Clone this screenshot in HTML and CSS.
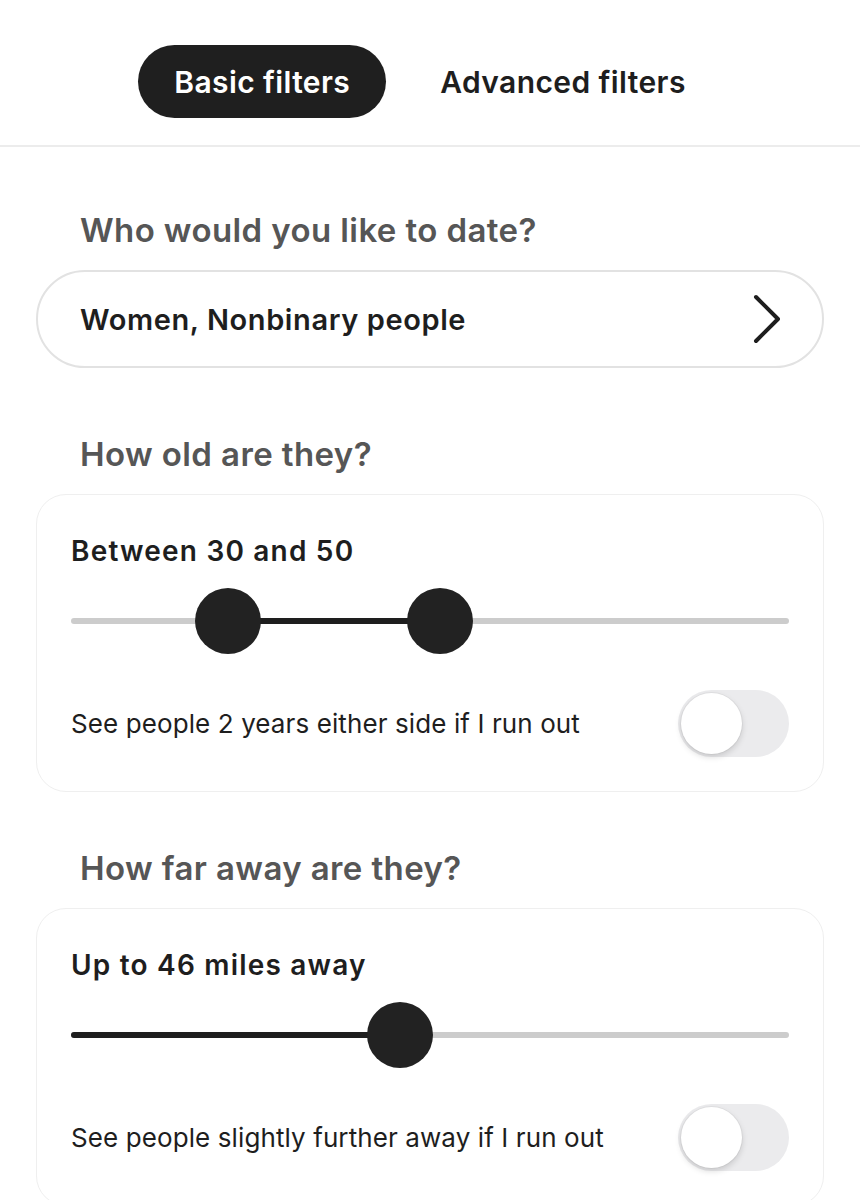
FILE: index.html
```html
<!DOCTYPE html>
<html>
<head>
<meta charset="utf-8">
<link rel="stylesheet" href="styles.css">
</head>
<body>
<header class="tabs">
  <div class="tab active">Basic filters</div>
  <div class="tab">Advanced filters</div>
</header>
<main class="content">
  <h2 class="heading">Who would you like to date?</h2>
  <div class="select">
    <span class="select-text">Women, Nonbinary people</span>
    <svg class="chevron" width="32" height="50" viewBox="0 0 32 50"><path d="M4 3 L26 25 L4 47" fill="none" stroke="#1e1e1e" stroke-width="4" stroke-linecap="round" stroke-linejoin="round"/></svg>
  </div>

  <h2 class="heading">How old are they?</h2>
  <section class="card">
    <div class="card-title">Between 30 and 50</div>
    <div class="slider">
      <div class="track"></div>
      <div class="fill" style="left: 157px; width: 212px;"></div>
      <div class="thumb" style="left: 157px;"></div>
      <div class="thumb" style="left: 369px;"></div>
    </div>
    <div class="toggle-row">
      <span class="toggle-text">See people 2 years either side if I run out</span>
      <div class="toggle"><div class="knob"></div></div>
    </div>
  </section>

  <h2 class="heading">How far away are they?</h2>
  <section class="card">
    <div class="card-title">Up to 46 miles away</div>
    <div class="slider">
      <div class="track"></div>
      <div class="fill" style="left: 0; width: 329px;"></div>
      <div class="thumb" style="left: 329px;"></div>
    </div>
    <div class="toggle-row">
      <span class="toggle-text">See people slightly further away if I run out</span>
      <div class="toggle"><div class="knob"></div></div>
    </div>
  </section>
</main>
</body>
</html>
```
FILE: styles.css
```css
* { box-sizing: border-box; }
html, body { margin: 0; padding: 0; background: #ffffff; }
body {
  font-family: Inter, "Noto Sans", sans-serif;
  color: #1e1e1e;
  width: 860px;
  overflow: hidden;
}
.tabs {
  display: flex;
  justify-content: center;
  gap: 18px;
  padding: 45px 0 27px;
  border-bottom: 2px solid #ececec;
}
.tab {
  height: 73px;
  padding: 0 36px;
  border-radius: 37px;
  display: flex;
  align-items: center;
  font-size: 30px;
  font-weight: 600;
  letter-spacing: 0.4px;
  color: #1e1e1e;
}
.tab.active {
  background: #1f1f1f;
  color: #ffffff;
}
.content {
  padding: 0 36px;
  display: flex;
  flex-direction: column;
}
.heading {
  margin: 0;
  padding-left: 44px;
  font-size: 33px;
  font-weight: 600;
  color: #565656;
  letter-spacing: 0.4px;
  line-height: 40px;
}
.content > .heading:first-child { margin-top: 63px; }
.select {
  margin-top: 20px;
  height: 98px;
  border: 2px solid #e2e2e2;
  border-radius: 49px;
  display: flex;
  align-items: center;
  justify-content: space-between;
  padding: 0 38px 0 42px;
}
.select-text {
  font-size: 29px;
  font-weight: 600;
  letter-spacing: 0.6px;
}
.chevron { display: block; }
.select + .heading { margin-top: 66px; }
.card + .heading { margin-top: 56px; }
.heading + .card { margin-top: 20px; }
.card {
  border: 1.5px solid #efefef;
  border-radius: 30px;
  padding: 38px 34px 34px 34px;
}
.card-title {
  font-size: 28px;
  font-weight: 600;
  letter-spacing: 1.2px;
  line-height: 36px;
}
.slider {
  position: relative;
  height: 66px;
  margin-top: 19px;
}
.track {
  position: absolute;
  left: 0; right: 0; top: 30px;
  height: 6px;
  border-radius: 3px;
  background: #cccccc;
}
.fill {
  position: absolute;
  top: 30px;
  height: 6px;
  border-radius: 3px;
  background: #1e1e1e;
}
.thumb {
  position: absolute;
  top: 0;
  width: 66px;
  height: 66px;
  margin-left: -33px;
  border-radius: 50%;
  background: #222222;
}
.toggle-row {
  margin-top: 36px;
  display: flex;
  align-items: center;
  justify-content: space-between;
}
.toggle-text {
  font-size: 26px;
  font-weight: 400;
  letter-spacing: 0.1px;
}
.toggle {
  width: 111px;
  height: 67px;
  border-radius: 34px;
  background: #ebebed;
  padding: 3px;
  display: flex;
  align-items: center;
}
.knob {
  width: 61px;
  height: 61px;
  border-radius: 50%;
  background: #ffffff;
  box-shadow: 0 3px 6px rgba(0,0,0,0.15), 0 0 0 1px rgba(0,0,0,0.04);
}
```
